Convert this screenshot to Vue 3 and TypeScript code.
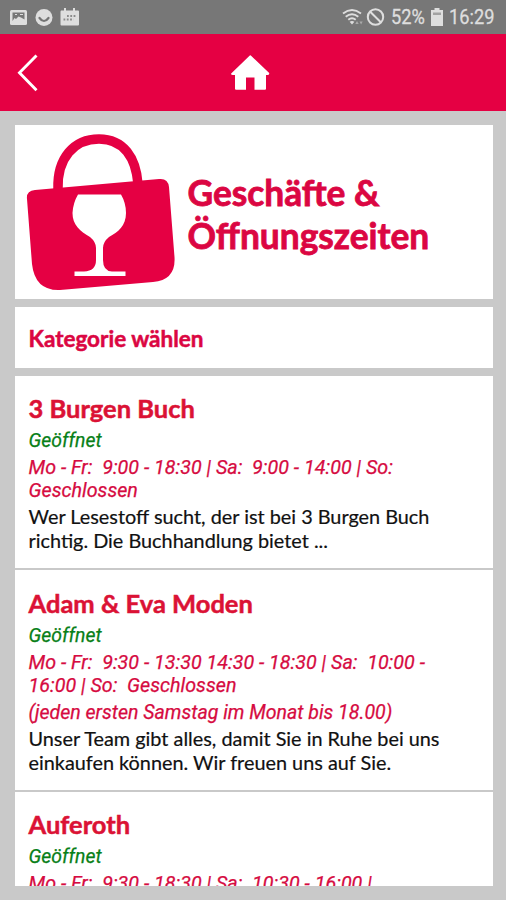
<script setup lang="ts">
interface Shop {
  name: string
  status: string
  hours: string[]
  note?: string
  text: string[]
}

const shops: Shop[] = [
  {
    name: '3 Burgen Buch',
    status: 'Geöffnet',
    hours: ['Mo - Fr:  9:00 - 18:30 | Sa:  9:00 - 14:00 | So:', 'Geschlossen'],
    text: ['Wer Lesestoff sucht, der ist bei 3 Burgen Buch', 'richtig. Die Buchhandlung bietet ...'],
  },
  {
    name: 'Adam & Eva Moden',
    status: 'Geöffnet',
    hours: ['Mo - Fr:  9:30 - 13:30 14:30 - 18:30 | Sa:  10:00 -', '16:00 | So:  Geschlossen'],
    note: '(jeden ersten Samstag im Monat bis 18.00)',
    text: ['Unser Team gibt alles, damit Sie in Ruhe bei uns', 'einkaufen können. Wir freuen uns auf Sie.'],
  },
  {
    name: 'Auferoth',
    status: 'Geöffnet',
    hours: ['Mo - Fr:  9:30 - 18:30 | Sa:  10:30 - 16:00 |'],
    text: [],
  },
]
</script>

<template>
  <div class="screen">
    <div class="status-bar">
      <svg class="notifications" width="72" height="20" viewBox="0 0 72 20">
        <rect x="0" y="2" width="17" height="15" rx="1.5" fill="#dedede" />
        <path d="M2.500 13V4.500H14.500V11.500L11 9.500L8.500 8.500L6 11L4.500 10Z" fill="#777" />
        <path d="M5 6.500h2M10 6.500h3" stroke="#dedede" stroke-width="1" />
        <circle cx="34" cy="9.500" r="8.500" fill="#dedede" />
        <path d="M29.500 10q4.500 6 9 0" fill="none" stroke="#747474" stroke-width="2.200" stroke-linecap="round" />
        <path d="M51 2.500h3V0h2v2.500h7V0h2v2.500h3q1 0 1 1V16.500q0 1-1 1H51.500q-1 0-1-1V3.500z" fill="#dedede" />
        <path d="M57 8h9M53.500 11.500h10" stroke="#8b8b8b" stroke-width="1.800" stroke-dasharray="1.800 1.500" />
      </svg>
      <div class="system">
        <svg width="44" height="22" viewBox="0 0 44 22">
          <g fill="none" stroke="#dedede" stroke-width="1.900">
            <path d="M1 7.500q9-7 18 0M3.700 10.800q6.300-5 12.600 0M6.300 13.800q3.700-3 7.400 0" />
          </g>
          <path d="M7.600 15.800q2.400-1.500 4.800 0L10 18.500z" fill="#dedede" />
          <path d="M13.300 18l1.700-3 1.700 3zM17.500 15.500h3.200l-1.600 3z" fill="#aaa" />
          <circle cx="33.500" cy="11" r="7.700" fill="none" stroke="#dedede" stroke-width="2" />
          <path d="M28.200 5.700l10.600 10.600" stroke="#dedede" stroke-width="2" />
        </svg>
        <span class="percent"><span class="narrow">52%</span></span>
        <svg class="battery" width="12" height="18" viewBox="0 0 12 18">
          <path d="M3.500 0h5v2H12v16H0V2h3.500z" fill="#dedede" />
          <path d="M2 4.500h8V7H2z" fill="#a2a2a2" />
        </svg>
        <span class="time"><span class="narrow">16:29</span></span>
      </div>
    </div>

    <header class="nav-bar">
      <svg class="back" width="24" height="40" viewBox="0 0 24 40">
        <path d="M19.500 2.500L2.500 19.800L19.500 37.200" fill="none" stroke="#fff" stroke-width="2.900" />
      </svg>
      <svg class="home" width="40" height="36" viewBox="0 0 40 36">
        <path d="M19.800 .5Q20.300 0 20.800 .5L39.200 18Q39.500 20 38 20H36V33.500Q36 34.800 35 34.800H24.500V22.500H16V34.800H6Q5 34.800 5 33.500V20H3Q.5 20 1.200 18.500z" fill="#fff" />
      </svg>
    </header>

    <main class="content">
      <section class="hero">
        <svg class="bag" width="160" height="170" viewBox="15 125 160 170">
          <path d="M58 189C57 158 74 139 99 139S136 158 138 184" fill="none" stroke="#e50043" stroke-width="9.500" />
          <path d="M35 190L159 179Q168 178 169 187L174.500 257Q176 280 153 282L60 290Q35 291 32 264L27 199Q26 191 35 190Z" fill="#e50043" />
          <path d="M78 194.500H121Q126 203 126 213C126 226 118 232 109 237Q103 242 103 248V260Q103 271 112 271.500H125.500V276H74.500V271.500H84Q96 271 96 260V248Q96 242 90 237C80 231 72.500 225 72.500 213Q73 203 78 194.500Z" fill="#fff" />
        </svg>
        <h1>Geschäfte &amp;<br />Öffnungszeiten</h1>
      </section>

      <section class="category">Kategorie wählen</section>

      <section class="list">
        <article v-for="shop in shops" :key="shop.name" class="shop">
          <h2>{{ shop.name }}</h2>
          <p class="status">{{ shop.status }}</p>
          <p class="hours"><span v-for="line in shop.hours" :key="line">{{ line }}</span></p>
          <p v-if="shop.note" class="hours note">{{ shop.note }}</p>
          <p class="text"><span v-for="line in shop.text" :key="line">{{ line }}</span></p>
        </article>
      </section>
    </main>
  </div>
</template>

<style>
body {
  margin: 0;
  background: #c9c9c9;
}
</style>

<style scoped>
.screen {
  display: flex;
  flex-direction: column;
  width: 506px;
  height: 900px;
  overflow: hidden;
  background: #c9c9c9;
  font-family: Lato, "Liberation Sans", sans-serif;
}
.status-bar {
  display: flex;
  flex: none;
  justify-content: space-between;
  align-items: center;
  box-sizing: border-box;
  height: 34px;
  padding: 0 11px 0 10px;
  background: #777;
}
.notifications {
  margin-top: 1px;
}
.system {
  display: flex;
  align-items: center;
  color: #dedede;
  font: 20.5px/36px Roboto, sans-serif;
  -webkit-text-stroke: 0.3px;
}
.percent {
  width: 34px;
  margin-left: 5px;
}
.battery {
  margin: 0 6px 0 6px;
}
.time {
  width: 46px;
}
.narrow {
  display: inline-block;
  transform: scaleX(0.89);
  transform-origin: left;
}
.nav-bar {
  display: grid;
  grid-template-columns: 1fr auto 1fr;
  align-items: center;
  flex: none;
  height: 77px;
  padding: 0 23px 0 17px;
  background: #e50043;
}
.home {
  margin-top: 1px;
}
.content {
  display: flex;
  flex-direction: column;
  gap: 8px;
  flex: 1;
  min-height: 0;
  padding: 14px 13.500px 14px 14.500px;
}
.hero {
  display: flex;
  flex: none;
  height: 173.500px;
  background: #fff;
}
.bag {
  flex: none;
  overflow: visible;
}
h1 {
  margin: 47px 0 0 13px;
  color: #db0642;
  font-size: 35.300px;
  line-height: 42.500px;
  font-weight: 700;
  white-space: nowrap;
  -webkit-text-stroke: 0.8px;
}
.category {
  flex: none;
  height: 61px;
  padding-left: 14px;
  background: #fff;
  color: #db0642;
  font-size: 22.500px;
  line-height: 63px;
  font-weight: 700;
  -webkit-text-stroke: 0.5px;
}
.list {
  flex: 1;
  min-height: 0;
  overflow: hidden;
  background: #fff;
}
.shop {
  padding: 16.300px 0 16.200px 14px;
  border-bottom: 2px solid #c9c9c9;
  white-space: pre;
}
h2 {
  margin: 0;
  color: #db1235;
  font-size: 25.500px;
  line-height: 33px;
  font-weight: 700;
  -webkit-text-stroke: 0.5px;
}
p {
  margin: 0;
}
p span {
  display: block;
}
.status,
.hours {
  font-family: Roboto, sans-serif;
  font-style: italic;
  font-size: 19.700px;
  -webkit-text-stroke: 0.25px;
}
.status {
  color: #088018;
  font-size: 19.400px;
  line-height: 31px;
}
.hours {
  padding-bottom: 3px;
  color: #d60b41;
  line-height: 23.500px;
}
.note {
  font-size: 19.550px;
}
.text {
  margin-top: -1.500px;
  color: #111;
  font-size: 19.850px;
  line-height: 24px;
  -webkit-text-stroke: 0.2px;
}
</style>
